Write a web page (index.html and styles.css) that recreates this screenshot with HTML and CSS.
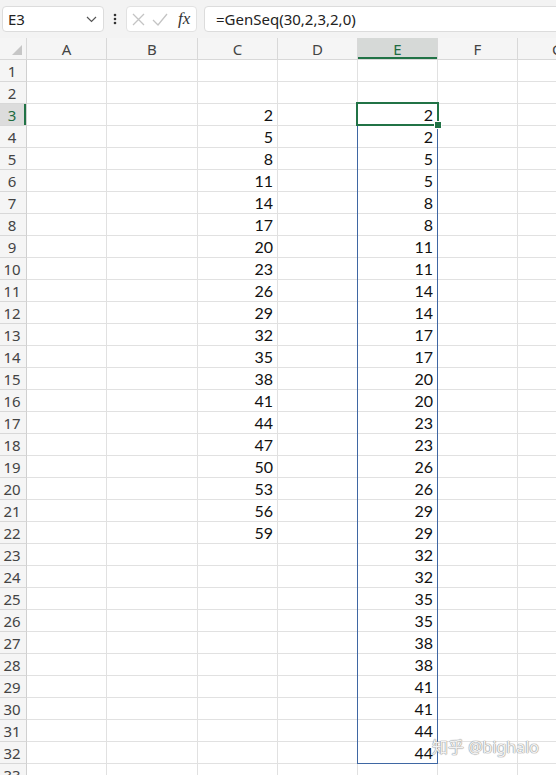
FILE: index.html
```html
<!DOCTYPE html>
<html lang="zh">
<head>
  <meta charset="UTF-8" />
  <title>GenSeq</title>
  <link rel="stylesheet" href="styles.css">
</head>
<body>

  <div class="toolbar">
    <div class="namebox">
      <span>E3</span>
      <svg class="chev" width="11" height="7" viewBox="0 0 11 7"><path d="M1 1l4.5 4.5L10 1" fill="none" stroke="#555" stroke-width="1.2"/></svg>
    </div>
    <svg class="grip" width="4" height="12" viewBox="0 0 4 12"><circle cx="2" cy="2" r="1.3" fill="#333"/><circle cx="2" cy="6" r="1.3" fill="#333"/><circle cx="2" cy="10" r="1.3" fill="#333"/></svg>
    <div class="fxbox">
      <svg width="15" height="15" viewBox="0 0 15 15"><path d="M2 2l11 11M13 2L2 13" stroke="#c4c4c4" stroke-width="1.3" fill="none"/></svg>
      <svg width="16" height="15" viewBox="0 0 16 15"><path d="M1 8l5 5L15 2" stroke="#c4c4c4" stroke-width="1.3" fill="none"/></svg>
      <span class="fx">fx</span>
    </div>
    <div class="formula">=GenSeq(30,2,3,2,0)</div>
  </div>

  <div class="sheet" id="sheet">
    <div class="spill"></div>
    <div class="active"><span class="handle"></span></div>
    <div class="watermark">知乎 @bighalo</div>
  </div>

  <script>
    const cols = ['A', 'B', 'C', 'D', 'E', 'F', 'G'];
    const sheet = document.getElementById('sheet');

    function addCell(cls, text) {
      const d = document.createElement('div');
      d.className = cls;
      if (text !== undefined) d.textContent = text;
      sheet.appendChild(d);
    }

    // header row
    addCell('corner');
    cols.forEach(c => addCell(c === 'E' ? 'colhead sel' : 'colhead', c));

    for (let r = 1; r <= 33; r++) {
      addCell(r === 3 ? 'rowhead sel' : 'rowhead', r);
      cols.forEach(c => {
        let v;
        if (c === 'C' && r >= 3 && r <= 22) v = 2 + (r - 3) * 3;
        if (c === 'E' && r >= 3 && r <= 32) v = 2 + Math.floor((r - 3) / 2) * 3;
        addCell('cell', v);
      });
    }
  </script>

</body>
</html>
```

FILE: styles.css
```css
html, body { margin: 0; padding: 0; background: #fff; overflow: hidden; }
body { width: 556px; height: 775px; font-family: "Noto Sans", sans-serif; color: #222; }

.toolbar {
  height: 38px; box-sizing: border-box;
  display: flex; align-items: center;
  padding: 0 0 0 2px; background: #f3f3f3;
}
.namebox {
  width: 102px; height: 26px; box-sizing: border-box;
  display: flex; align-items: center; justify-content: space-between;
  padding: 0 6px 0 5px;
  background: #fff; border: 1px solid #dcdcdc; border-radius: 4px;
  font-size: 15px; color: #222;
}
.chev { margin-top: 1px; }
.grip { margin: 0 0 0 9px; }
.fxbox {
  width: 71px; height: 26px; box-sizing: border-box; margin-left: 9px;
  display: flex; align-items: center; gap: 6px; padding-left: 4px;
  background: #fff; border: 1px solid #e2e2e2; border-radius: 4px;
}
.fx {
  font-family: "Liberation Serif", serif; font-style: italic;
  font-size: 17px; color: #333; margin-left: 4px;
}
.formula {
  flex: 1; height: 26px; box-sizing: border-box; margin-left: 7px; margin-right: -8px;
  display: flex; align-items: center; padding-left: 11px;
  background: #fff; border: 1px solid #dcdcdc; border-radius: 4px;
  font-size: 15px; color: #222;
}

.sheet {
  position: relative;
  display: grid;
  grid-template-columns: 27px 80px 91px 80px 80px 80px 80px 80px;
  grid-auto-rows: 22px;
  width: 556px; overflow: hidden;
}
.sheet > div { box-sizing: border-box; }

.corner, .colhead, .rowhead {
  background: #f5f5f5; color: #444;
  border-right: 1px solid #d8d8d8; border-bottom: 1px solid #d8d8d8;
}
.corner { position: relative; }
.corner::after {
  content: ""; position: absolute; right: 4px; bottom: 4px;
  border-left: 10px solid transparent; border-bottom: 10px solid #c6c6c6;
}
.colhead {
  display: flex; align-items: center; justify-content: center;
  font-size: 15px;
}
.colhead.sel { background: #d6d9d7; color: #1e6b41; box-shadow: inset 0 -2px 0 #217346; }
.rowhead {
  display: flex; align-items: center; justify-content: center;
  padding-right: 2px; font-size: 15px; border-right-color: #d0d0d0;
}
.rowhead.sel { background: #dcdcdc; color: #1e6b41; box-shadow: inset -2px 0 0 #217346; }

.cell {
  border-right: 1px solid #e1e1e1; border-bottom: 1px solid #e1e1e1;
  font-family: "Lato", "Noto Sans", sans-serif; font-size: 16px; color: #111;
  text-align: right; padding: 0 4px 0 0; line-height: 21px;
}

.spill {
  position: absolute; left: 357px; top: 65px; width: 81px; height: 661px;
  box-sizing: border-box; border: 1px solid #3f67a3; pointer-events: none;
}
.active {
  position: absolute; left: 356px; top: 64px; width: 83px; height: 24px;
  box-sizing: border-box; border: 2px solid #217346;
}
.handle {
  position: absolute; right: -5px; bottom: -5px; width: 6px; height: 6px;
  background: #217346; border: 1px solid #fff;
}
.watermark {
  position: absolute; left: 432px; top: 696px;
  font-size: 16px; color: rgba(255, 255, 255, 0.9);
  font-family: "Noto Sans", "Noto Sans CJK SC", sans-serif;
  text-shadow: 0 0 1px #999, 0 0 1px #999, 0 0 1px #999;
}
```
